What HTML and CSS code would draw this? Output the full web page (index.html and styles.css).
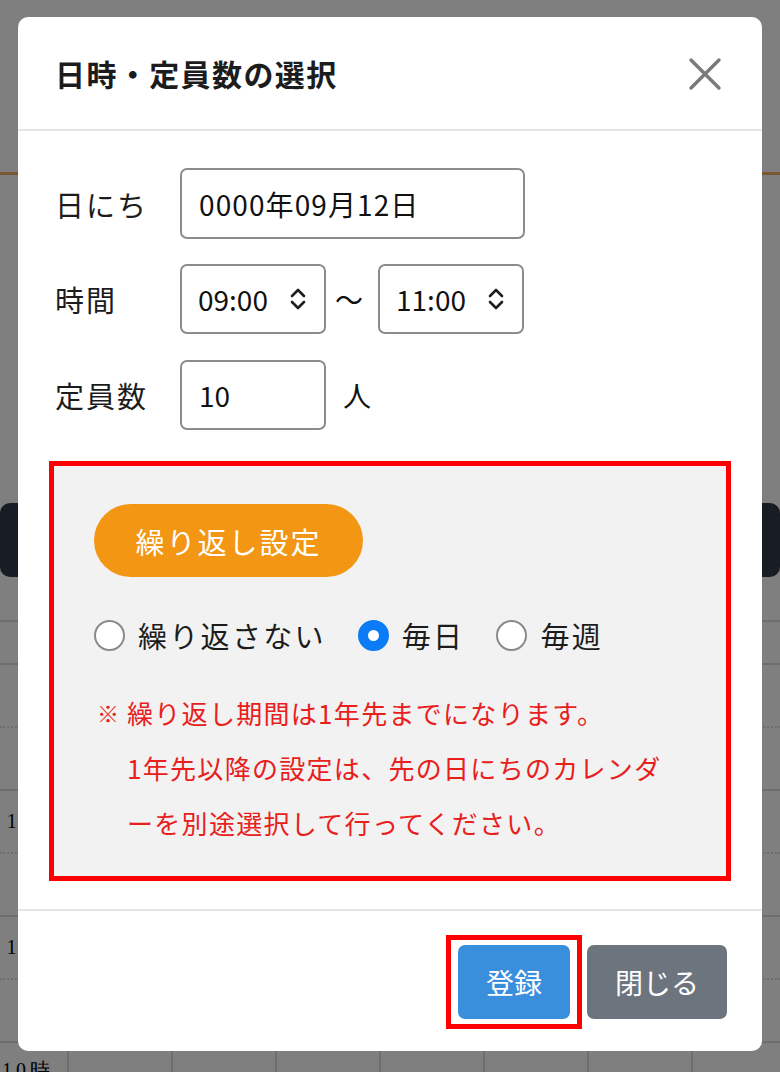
FILE: index.html
```html
<!DOCTYPE html>
<html>
	<link rel="stylesheet" href="styles.css">

	<head>
		<title>日時・定員数の選択</title>
	</head>

	<body>
		<div class="page">
			<div class="topbar"></div>
			<div class="darkbar"></div>

			<div class="timetable">
				<div class="tt-row head"><div class="tt-time"></div><div class="tt-cell"></div><div class="tt-cell"></div><div class="tt-cell"></div><div class="tt-cell"></div><div class="tt-cell"></div><div class="tt-cell"></div><div class="tt-cell"></div><div class="tt-cell"></div></div>
				<div class="tt-row half"><div class="tt-time"></div><div class="tt-cell"></div><div class="tt-cell"></div><div class="tt-cell"></div><div class="tt-cell"></div><div class="tt-cell"></div><div class="tt-cell"></div><div class="tt-cell"></div><div class="tt-cell"></div></div>
				<div class="tt-row"><div class="tt-time"></div><div class="tt-cell"></div><div class="tt-cell"></div><div class="tt-cell"></div><div class="tt-cell"></div><div class="tt-cell"></div><div class="tt-cell"></div><div class="tt-cell"></div><div class="tt-cell"></div></div>
				<div class="tt-row half"><div class="tt-time">11時</div><div class="tt-cell"></div><div class="tt-cell"></div><div class="tt-cell"></div><div class="tt-cell"></div><div class="tt-cell"></div><div class="tt-cell"></div><div class="tt-cell"></div><div class="tt-cell"></div></div>
				<div class="tt-row"><div class="tt-time"></div><div class="tt-cell"></div><div class="tt-cell"></div><div class="tt-cell"></div><div class="tt-cell"></div><div class="tt-cell"></div><div class="tt-cell"></div><div class="tt-cell"></div><div class="tt-cell"></div></div>
				<div class="tt-row half"><div class="tt-time">12時</div><div class="tt-cell"></div><div class="tt-cell"></div><div class="tt-cell"></div><div class="tt-cell"></div><div class="tt-cell"></div><div class="tt-cell"></div><div class="tt-cell"></div><div class="tt-cell"></div></div>
				<div class="tt-row"><div class="tt-time"></div><div class="tt-cell"></div><div class="tt-cell"></div><div class="tt-cell"></div><div class="tt-cell"></div><div class="tt-cell"></div><div class="tt-cell"></div><div class="tt-cell"></div><div class="tt-cell"></div></div>
				<div class="tt-row last"><div class="tt-time">10時</div><div class="tt-cell"></div><div class="tt-cell"></div><div class="tt-cell"></div><div class="tt-cell"></div><div class="tt-cell"></div><div class="tt-cell"></div><div class="tt-cell"></div><div class="tt-cell"></div></div>
			</div>
		</div>

		<div class="backdrop"></div>

		<div class="modal">
			<div class="modal-header">
				<h5 class="modal-title">日時・定員数の選択</h5>
				<svg class="close" width="34" height="34" viewBox="0 0 34 34">
					<path d="M3 3 L31 31 M31 3 L3 31" stroke="#7a7a7a" stroke-width="3.4" stroke-linecap="round" fill="none"/>
				</svg>
			</div>

			<div class="modal-body">
				<div class="form-row">
					<div class="lbl">日にち</div>
					<div class="field date">0000年09月12日</div>
				</div>

				<div class="form-row">
					<div class="lbl">時間</div>
					<div class="field time">
						<span>09:00</span>
						<svg class="updown" width="18" height="26" viewBox="0 0 18 26">
							<path d="M3 10 L9 4 L15 10 M3 16 L9 22 L15 16" stroke="#1e1e1e" stroke-width="2.6" stroke-linecap="round" stroke-linejoin="round" fill="none"/>
						</svg>
					</div>
					<span class="tilde">～</span>
					<div class="field time">
						<span>11:00</span>
						<svg class="updown" width="18" height="26" viewBox="0 0 18 26">
							<path d="M3 10 L9 4 L15 10 M3 16 L9 22 L15 16" stroke="#1e1e1e" stroke-width="2.6" stroke-linecap="round" stroke-linejoin="round" fill="none"/>
						</svg>
					</div>
				</div>

				<div class="form-row">
					<div class="lbl">定員数</div>
					<div class="field num">10</div>
					<span class="unit">人</span>
				</div>

				<div class="repeat-box">
					<div class="pill">繰り返し設定</div>

					<div class="radios">
						<label class="radio"><span class="dot"></span>繰り返さない</label>
						<label class="radio"><span class="dot checked"></span>毎日</label>
						<label class="radio"><span class="dot"></span>毎週</label>
					</div>

					<div class="note">
						<span class="mark">※</span>
						<div class="note-text">繰り返し期間は1年先までになります。<br>1年先以降の設定は、先の日にちのカレンダーを別途選択して行ってください。</div>
					</div>
				</div>
			</div>

			<div class="modal-footer">
				<div class="highlight">
					<div class="btn btn-primary">登録</div>
				</div>
				<div class="btn btn-secondary">閉じる</div>
			</div>
		</div>
	</body>
</html>
```

FILE: styles.css
```css
		body {
			margin: 0;
			font-family: "Noto Sans CJK JP", "Noto Sans", sans-serif;
			color: #212529;
			background: #ffffff;
			overflow: hidden;
		}

		.page {
			height: 1072px;
			overflow: hidden;
		}

		.topbar {
			height: 172px;
			border-bottom: 3px solid #f2ae62;
		}

		.darkbar {
			margin-top: 328px;
			height: 74px;
			background: #2e384a;
			border-radius: 10px;
		}

		.timetable {
			margin-top: 43px;
			border-top: 2px solid #dcdcdc;
		}

		.tt-row {
			display: flex;
			height: 61px;
			border-bottom: 2px solid #dcdcdc;
		}

		.tt-row.head {
			height: 41px;
		}

		.tt-row.half {
			border-bottom: 2px dotted #dcdcdc;
		}

		.tt-row.last {
			border-bottom: 0;
		}

		.tt-time {
			width: 65px;
			flex: none;
			display: flex;
			align-items: center;
			justify-content: center;
			font-family: "Liberation Serif", serif;
			font-size: 20px;
			letter-spacing: 4px;
			color: #000;
		}

		.tt-row.last .tt-time {
			align-items: flex-start;
			padding-top: 14px;
			justify-content: flex-start;
			padding-left: 2px;
		}

		.tt-cell {
			width: 102px;
			flex: none;
			border-left: 2px solid #dcdcdc;
		}

		.backdrop {
			position: fixed;
			top: 0;
			left: 0;
			right: 0;
			bottom: 0;
			background: rgba(0, 0, 0, 0.5);
		}

		.modal {
			position: absolute;
			top: 17px;
			left: 18px;
			width: 744px;
			background: #ffffff;
			border-radius: 10px;
		}

		.modal-header {
			height: 112px;
			padding: 0 40px 0 37px;
			display: flex;
			align-items: center;
			justify-content: space-between;
			border-bottom: 2px solid #e3e5e8;
		}

		.modal-title {
			margin: 0;
			font-size: 30px;
			font-weight: bold;
			letter-spacing: 1.4px;
			color: #1c1c1c;
		}

		.close {
			margin-top: 2px;
		}

		.modal-body {
			padding: 37px 37px 28px 37px;
		}

		.form-row {
			display: flex;
			align-items: center;
			margin-bottom: 25px;
		}

		.form-row:nth-child(2) {
			margin-bottom: 26px;
		}

		.form-row:nth-child(3) {
			margin-bottom: 31px;
		}

		.lbl {
			width: 125px;
			flex: none;
			font-size: 29px;
			letter-spacing: 2px;
			color: #1c1c1c;
		}

		.field {
			box-sizing: border-box;
			height: 71px;
			border: 2px solid #8c8c8c;
			border-radius: 7px;
			display: flex;
			align-items: center;
			padding-left: 17px;
			font-size: 28px;
			color: #111;
		}

		.field.date {
			width: 345px;
			letter-spacing: 1.1px;
		}

		.field.time {
			width: 146px;
			height: 70px;
			justify-content: space-between;
			padding-right: 17px;
			padding-left: 16px;
		}

		.field.num {
			width: 146px;
			height: 70px;
		}

		.tilde {
			font-size: 28px;
			margin: 0 15px 0 9px;
			color: #111;
		}

		.unit {
			font-size: 28px;
			margin-left: 17px;
			color: #111;
		}

		.repeat-box {
			margin: 0 -6px;
			height: 420px;
			box-sizing: border-box;
			border: 5px solid #ff0000;
			background: #f2f2f2;
			padding: 38px 40px 0 40px;
		}

		.pill {
			width: 269px;
			height: 73px;
			border-radius: 37px;
			background: #f39613;
			color: #ffffff;
			font-size: 29px;
			letter-spacing: 2px;
			display: flex;
			align-items: center;
			justify-content: center;
		}

		.radios {
			margin-top: 38px;
			height: 40px;
			display: flex;
			align-items: center;
		}

		.radio {
			display: flex;
			align-items: center;
			font-size: 29px;
			letter-spacing: 2.3px;
			color: #1c1c1c;
			margin-right: 32px;
		}

		.dot {
			box-sizing: border-box;
			width: 31px;
			height: 31px;
			border-radius: 50%;
			border: 2.5px solid #8a8a8a;
			background: #ffffff;
			margin-right: 13px;
		}

		.dot.checked {
			border: 10px solid #0b7bf6;
			background: #ffffff;
		}

		.note {
			margin-top: 30px;
			display: flex;
			color: #e8201c;
			font-size: 26px;
			line-height: 55px;
			letter-spacing: 1.3px;
		}

		.mark {
			width: 30px;
			flex: none;
			margin-left: 3px;
			font-size: 22px;
		}

		.note-text {
			width: 560px;
		}

		.modal-footer {
			border-top: 2px solid #e3e5e8;
			padding: 24px 35px 22px 0;
			display: flex;
			justify-content: flex-end;
			align-items: center;
		}

		.highlight {
			border: 5px solid #ff0000;
			padding: 5px 7px;
			margin-right: 5px;
		}

		.btn {
			height: 74px;
			border-radius: 7px;
			display: flex;
			align-items: center;
			justify-content: center;
			color: #ffffff;
			font-size: 28px;
		}

		.btn-primary {
			width: 112px;
			background: #3a8fdc;
		}

		.btn-secondary {
			width: 140px;
			background: #6c757d;
		}
```
